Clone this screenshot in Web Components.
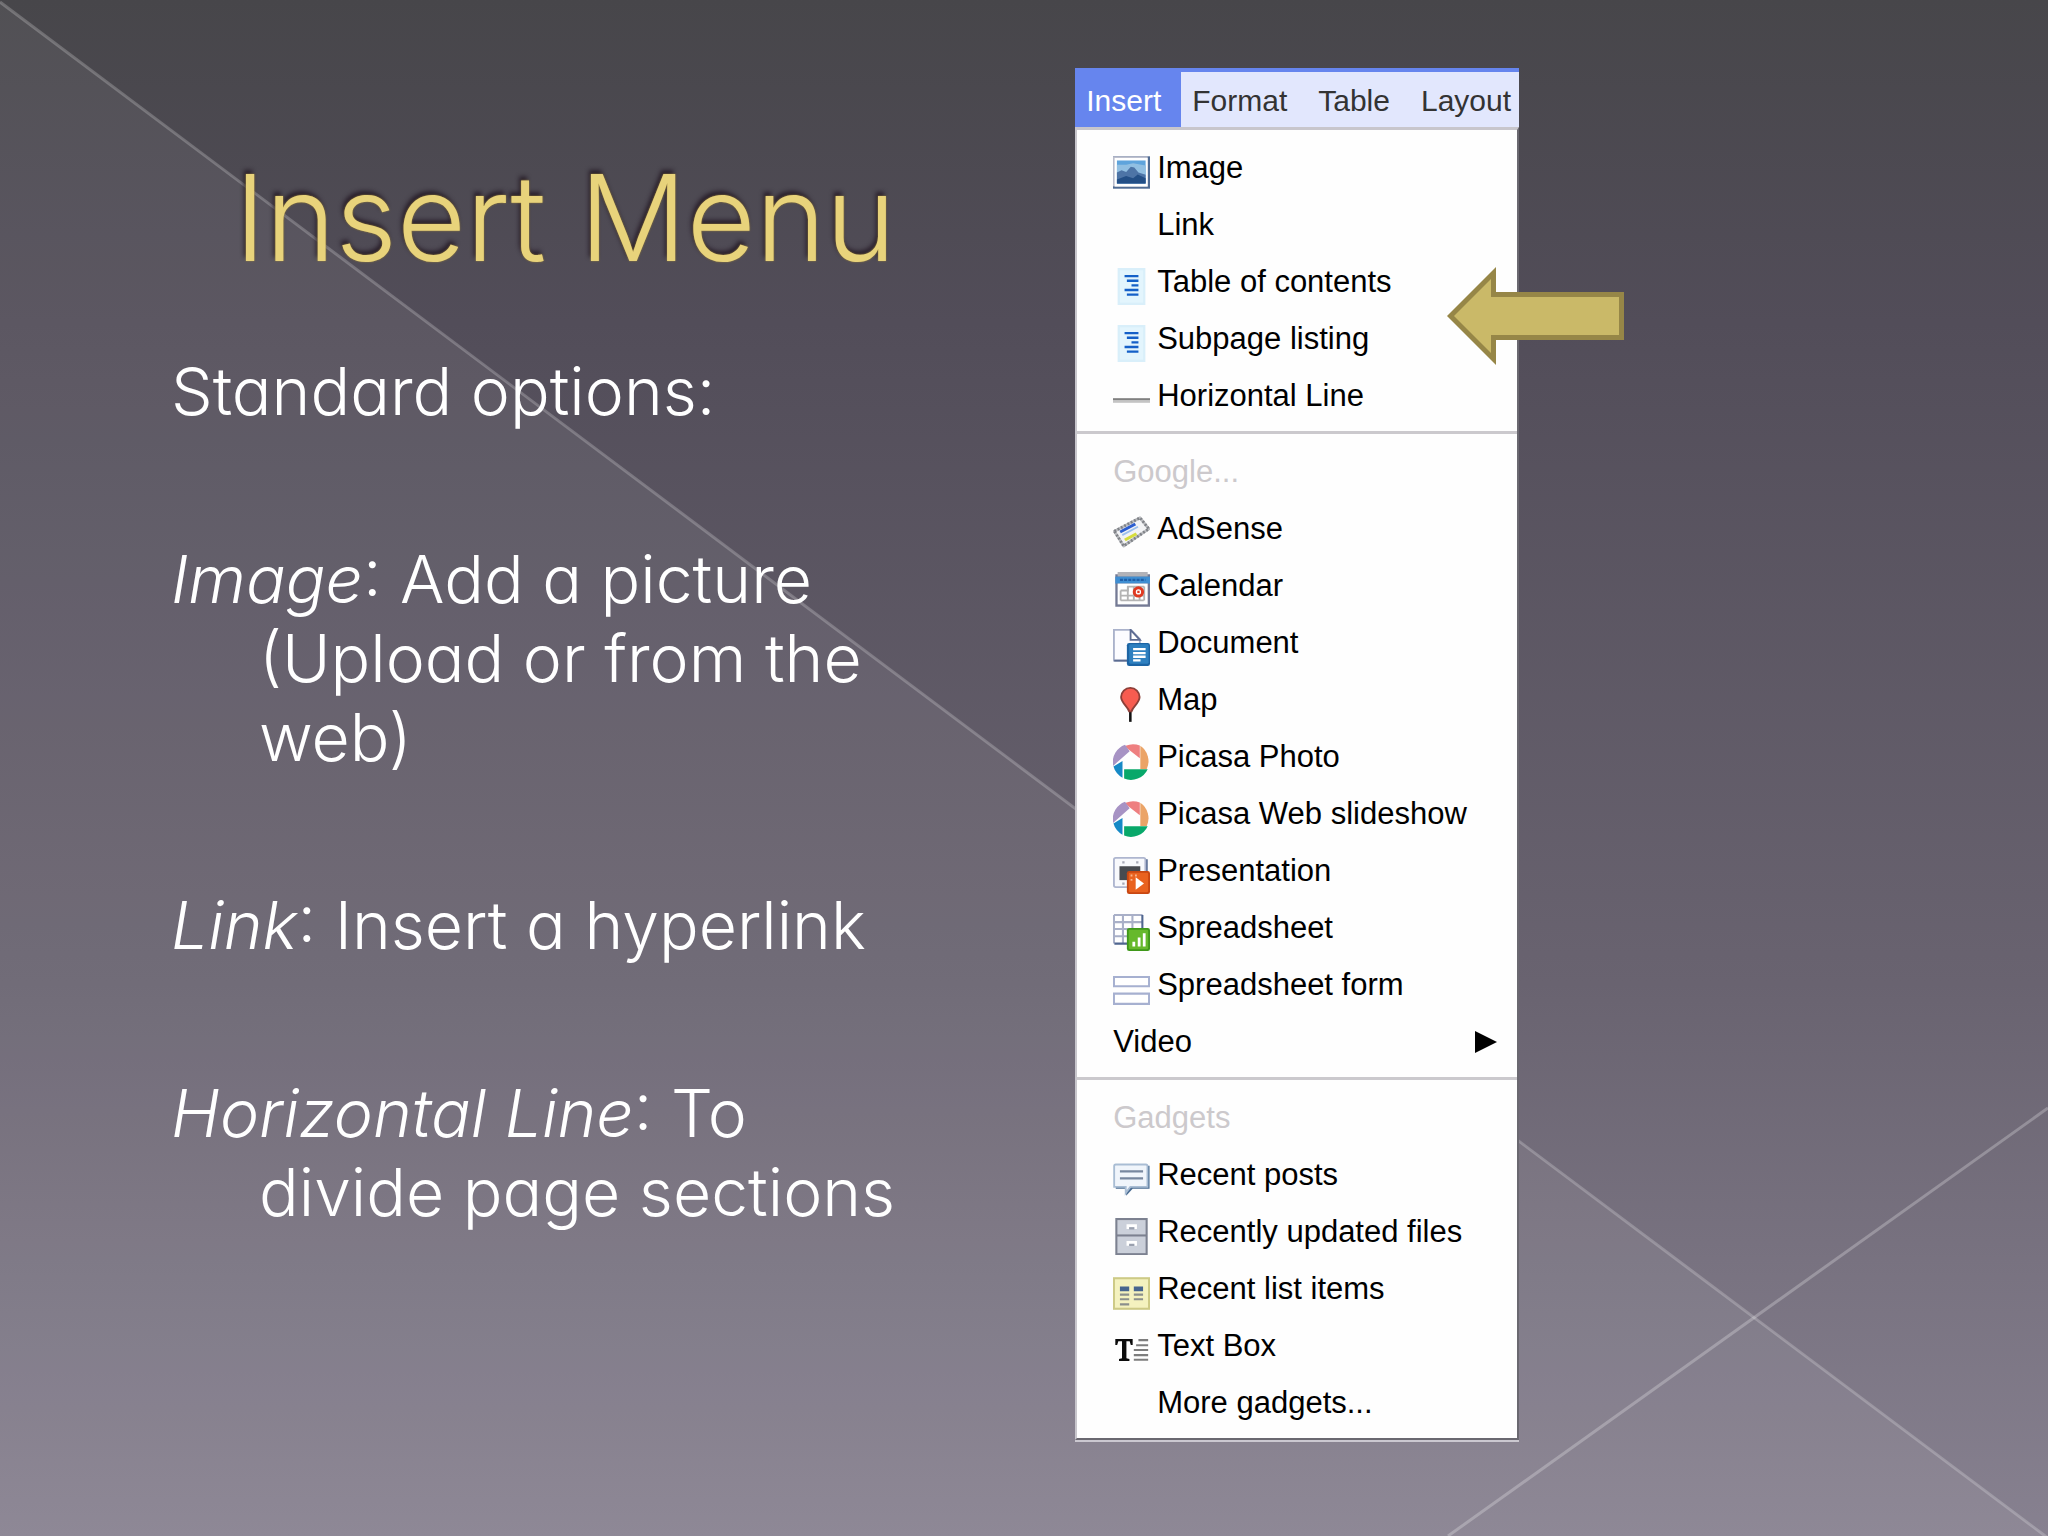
<!DOCTYPE html>
<html lang="en">
<head>
    <meta charset="UTF-8">
    <meta name="viewport" content="width=device-width, initial-scale=1.0">
    <title>Insert Menu</title>
    <style>
        body {
            margin: 0;
            background: #6b6572;
        }
    </style>
</head>
<body>
    <slide-page>
        <slide-title slot="text">Insert Menu</slide-title>
        <slide-notes slot="text">
            <p>Standard options:</p>
            <p><em>Image</em>: Add a picture<br>(Upload or from the<br>web)</p>
            <p><em>Link</em>: Insert a hyperlink</p>
            <p><em>Horizontal Line</em>: To<br>divide page sections</p>
        </slide-notes>
        <insert-menu slot="menu"></insert-menu>
        <callout-arrow slot="menu"></callout-arrow>
    </slide-page>

    <script>
        // Icons are drawn on a 16 x 16 grid
        const page = `
            <rect x="2" width="12" height="16" fill="#d9effa"/>
            <rect x="3" y="1" width="10" height="14" fill="#e3f5fd"/>
            <path d="M5 3h6v1H5zM6 5h5v1H6zM8 7h3v1H8zM5 9h6v1H5zM6 11h5v1H6z" fill="#1560c8"/>`;
        const picasa = `
            <path d="M5.5 1.2 A8 8 0 0 1 11.6 1.1 V6.6 L5.5 1.8z" fill="#ee7f80"/>
            <path d="M11.8 1.2 A8 8 0 0 1 14.6 11.2 H11.8z" fill="#eba467"/>
            <path d="M4.8 11.3 H15 A8 8 0 0 1 4.8 15.4z" fill="#08a86a"/>
            <path d="M0.2 10.2 L4.1 7.8 V15 A8 8 0 0 1 0.2 10.2z" fill="#1689c6"/>
            <path d="M0 9.6 A8 8 0 0 1 5.2 .8 L7.2 3.6 L0 9.9z" fill="#a793c4"/>`;

        const iconos = {
            image: `
                <rect y="1" width="16" height="14" fill="#4f6b93"/>
                <rect y="1" width="15" height="13" fill="#b9bccb"/>
                <rect x=".7" y="1.7" width="14.3" height="12.4" fill="#fff"/>
                <rect x="1.7" y="2.8" width="12.4" height="10" fill="#5fa4dc"/>
                <path d="M1.7 4.6h4l3-.6 5.4 1v4H1.7z" fill="#91bfe2"/>
                <path d="M1.7 8l2-1 2 .8 2-2.3 1.5.3L11 8l3.1 1v3.8H1.7z" fill="#4d74a6"/>
                <path d="M1.7 11l4-1.5 3 1 2-1.6 3.4 1.6v2.3H1.7z" fill="#234f86"/>`,
            toc: page,
            subpage: page,
            line: `<rect y="7" width="16" height="1" fill="#808080"/><rect y="8" width="16" height="1" fill="#c4c4c4"/>`,
            adsense: `
                <path d="M.6 7 11.700 1.200 15.500 6 4.600 13.400z" fill="#f2f3f5" stroke="#b9bbbf" stroke-width="1.200" stroke-linejoin="round"/>
                <path d="M.6 7 11.700 1.200 15.500 6 4.600 13.400z" fill="none" stroke="#7f8287" stroke-width="1.200" stroke-dasharray=".8 .8"/>
                <path d="M2.800 6.800l6.500-3.400.7 1-6.600 3.500z" fill="#2c5ed0"/>
                <path d="M4 8.700l6.800-3.600" stroke="#9cc0ee" stroke-width=".8"/>
                <path d="M4.800 10.300l5-2.700.7 1-5 2.800z" fill="#d6dd3c"/>`,
            calendar: `
                <path d="M1 1h15v14H1z" fill="#747a94"/>
                <path d="M2 0h13v2H2z" fill="#b1b2b8"/>
                <rect x="1" y="2" width="15" height="3" fill="#3f8ed2"/>
                <path d="M3 3.4h11" stroke="#1f5fa8" stroke-width=".9" stroke-dasharray="1.3 .5"/>
                <rect x="2" y="5" width="13" height="9" fill="#fff"/>
                <path d="M3.3 8h3.2V6.3h7M3.3 10.2h10M3.3 12.3h10M3.3 8v4.3M6.4 6.3v6M9 6.3v6M11.5 6.3v6M13.5 6.3v6" fill="none" stroke="#b4b4b4" stroke-width=".8"/>
                <circle cx="11" cy="8.600" r="1.800" fill="#fff" stroke="#df3a22" stroke-width="1.300"/>
                <rect x="10.500" y="8.100" width="1" height="1" fill="#df3a22"/>`,
            document: `
                <path d="M.4.4h7.4l3.8 4v9.2H.4z" fill="#fcfcff" stroke="#aab2cb" stroke-width=".8"/>
                <path d="M7.6.4v4.3h4z" fill="#fff" stroke="#5d6c92" stroke-width=".8"/>
                <path d="M.5 13.7h6" stroke="#5a6b90" stroke-width=".8"/>
                <rect x="6" y="6" width="10" height="10" rx="1" fill="#1c64a4"/>
                <rect x="7" y="6.6" width="8.4" height="8.4" rx=".6" fill="#2e80c0"/>
                <path d="M8.7 8.7h5.4M8.7 10.4h5.4M8.7 12h5.4M8.7 13.6h3.2" stroke="#fff"/>`,
            map: `
                <path d="M7.5 10v5.5" stroke="#111" stroke-width="1.1"/>
                <path d="M7.5.8a4 4 0 0 1 4 4C11.5 7.300 8.500 9 8 11H7C6.500 9 3.500 7.300 3.500 4.800a4 4 0 0 1 4-4z" fill="#f75c50" stroke="#8d3f38" stroke-width=".8"/>`,
            picasa: picasa,
            slideshow: picasa,
            presentation: `
                <path d="M1 1h14v12H1z" fill="#4e638c"/>
                <rect x=".4" y=".4" width="13.6" height="12.6" rx=".8" fill="#f8f9fc" stroke="#aeb6cf" stroke-width=".8"/>
                <path d="M4 1.8h1v1H4zM10 1.8h1v1h-1zM4 11h1v1H4z" fill="#a8abb8"/>
                <rect x="2.8" y="4" width="9" height="6" fill="#484b50"/>
                <rect x="6" y="6" width="10" height="10" rx="1" fill="#c84712"/>
                <rect x="6.800" y="6.800" width="8.400" height="8.400" rx=".5" fill="#e9621f"/>
                <path d="M9.800 8.800l3.600 2.700-3.600 2.700z" fill="#fff"/>
                <path d="M7.600 7.600h.8v.8h-.8zM9.500 7.600h.8v.8h-.8zM7.600 9.500h.8v.8h-.8z" fill="#f7b48c"/>`,
            spreadsheet: `
                <rect x=".4" y=".4" width="12.400" height="12.400" fill="#fff"/>
                <path d="M.4.4v12.400M4.300.4v12.400M8.400.4v12.400M.4.4h12.400M.4 3.500h12.400M.4 6.500h12.400M.4 9.600h12.400" stroke="#a9b0c8" stroke-width=".9" fill="none"/>
                <path d="M12.700.4v12.400H.6" stroke="#4f658f" stroke-width=".9" fill="none"/>
                <rect x="6" y="6" width="10" height="10" rx="1" fill="#3f981a"/>
                <rect x="6.800" y="6.800" width="8.400" height="8.400" rx=".5" fill="#66b92c"/>
                <path d="M9 12v2M11.300 10.200V14M13.500 8.300V14" stroke="#fff" stroke-width="1.200"/>`,
            form: `<path d="M.4 2.600h15.200v4H.4zM.4 9.800h15.200v4.400H.4z" fill="#fff" stroke="#a6b0d0" stroke-width=".9"/>`,
            posts: `
                <path d="M1.200 2h14.600v10H8.500l-2.800 3v-3H1.200z" fill="#4a6c92"/>
                <path d="M.5 2.200q0-.7.700-.7h13q.7 0 .7.700v9H7.500L5.500 13.800V11.200H.5z" fill="#f0f5fb" stroke="#a9bdd4" stroke-width=".8"/>
                <path d="M3 4.500h10M3 7.500h10" stroke="#77879f" stroke-width=".9"/>`,
            files: `
                <rect x="1" width="14" height="16" fill="#7c8190"/>
                <rect x="1.900" y=".9" width="12.200" height="6.200" fill="#cbd0da"/>
                <rect x="1.900" y="8" width="12.200" height="7.200" fill="#cbd0da"/>
                <path d="M6.400 4.800V3.300h3.400v1.500M6.400 12V10.500h3.400V12" fill="none" stroke="#fff" stroke-width="1.100"/>
                <path d="M7 4.500h2.200M7 11.700h2.200" stroke="#9aa0ae" stroke-width=".9"/>`,
            list: `
                <rect x=".4" y="1.400" width="15.200" height="13.200" fill="#f4f2bf" stroke="#cdca86" stroke-width=".9"/>
                <path d="M3 5h4v2H3zM9 5h4v2H9z" fill="#47658e"/>
                <path d="M3 8.500h4M3 10.500h4M3 12.700h4M9 8.500h4M9 10.500h4" stroke="#8a8f8c" stroke-width=".9"/>`,
            textbox: `
                <path d="M1 3h7.500v2.600h-.8L7.200 4H5.800v7.300l1.300.4v.8H2.600v-.8l1.300-.4V4H2.300l-.5 1.600H1z" fill="#0c0c0c"/>
                <path d="M11 3.500h4.200M10 5.700h5.200M9 7.800h6.200M9 10h6.200M9 12h6.200" stroke="#7d7d7d" stroke-width=".9"/>`,
            none: ''
        };

        class SlidePage extends HTMLElement {
            constructor() {
                super();
                this.attachShadow({ mode: 'open' });
            }
            connectedCallback() {
                this.shadowRoot.innerHTML = `
                    <style>
                        :host {
                            display: grid;
                            grid-template-columns: 52.5% 444px 1fr;
                            align-items: start;
                            position: relative;
                            box-sizing: border-box;
                            min-height: 100vh;
                            padding: 68px 0;
                            overflow: hidden;
                            background: linear-gradient(#47464a, #524d59 21%, #696370 64%, #878190);
                        }
                        svg {
                            position: absolute;
                            inset: 0;
                            width: 100%;
                            height: 100%;
                        }
                        .text {
                            position: relative;
                            padding: 80px 116px 0 171px;
                        }
                        .menu {
                            position: relative;
                        }
                    </style>
                    <svg viewBox="0 0 2048 1536" preserveAspectRatio="none" aria-hidden="true">
                        <path d="M0 2 2048 1538H0z" fill="#fff" fill-opacity=".06"/>
                        <path d="M0 2 2048 1538" stroke="#fff" stroke-opacity=".22" stroke-width="3"/>
                        <path d="M2048 1108 1448 1536" stroke="#fff" stroke-opacity=".25" stroke-width="3"/>
                    </svg>
                    <div class="text"><slot name="text"></slot></div>
                    <div class="menu"><slot name="menu"></slot></div>
                `;
            }
        }
        customElements.define('slide-page', SlidePage);

        class SlideTitle extends HTMLElement {
            constructor() {
                super();
                this.attachShadow({ mode: 'open' });
            }
            connectedCallback() {
                this.shadowRoot.innerHTML = `
                    <style>
                        :host {
                            display: block;
                        }
                        h1 {
                            margin: 0;
                            font: 350 119px/140px "Century Gothic", Inter, sans-serif;
                            color: #e8d37b;
                            text-align: center;
                            white-space: nowrap;
                            text-shadow: 0 0 2px #a48a3c, -2px -4px 4px rgba(30, 18, 30, .75);
                        }
                    </style>
                    <h1><slot></slot></h1>
                `;
            }
        }
        customElements.define('slide-title', SlideTitle);

        class SlideNotes extends HTMLElement {
            constructor() {
                super();
                this.attachShadow({ mode: 'open' });
            }
            connectedCallback() {
                this.shadowRoot.innerHTML = `
                    <style>
                        :host {
                            display: flex;
                            flex-direction: column;
                            gap: 109px;
                            padding-top: 64px;
                            font: 300 66px/79px "Century Gothic", Inter, sans-serif;
                            font-feature-settings: "cv11";
                            color: #fff;
                            white-space: nowrap;
                        }
                        ::slotted(p) {
                            margin: 0;
                            padding-left: 88px;
                            text-indent: -88px;
                        }
                    </style>
                    <slot></slot>
                `;
            }
        }
        customElements.define('slide-notes', SlideNotes);

        class MenuEntry extends HTMLElement {
            constructor() {
                super();
                this.attachShadow({ mode: 'open' });
            }
            connectedCallback() {
                const icono = this.getAttribute('icon');
                this.shadowRoot.innerHTML = `
                    <style>
                        :host {
                            display: block;
                        }
                        button {
                            display: flex;
                            align-items: center;
                            gap: 7px;
                            width: 100%;
                            padding: 0 20px 0 36px;
                            border: 0;
                            background: none;
                            font: 31px/57px "Liberation Sans", Arial, sans-serif;
                            color: #000;
                            text-align: left;
                            white-space: nowrap;
                        }
                        button:disabled {
                            color: #ccc9cc;
                        }
                        .icon {
                            flex: none;
                            width: 37px;
                            height: 37px;
                            margin-top: 10px;
                        }
                        .more {
                            width: 22px;
                            height: 22px;
                            margin-left: auto;
                        }
                    </style>
                    <button type="button" role="menuitem" ${this.hasAttribute('disabled') ? 'disabled' : ''}>
                        ${icono ? `<svg class="icon" viewBox="0 0 16 16" aria-hidden="true">${iconos[icono]}</svg>` : ''}
                        <span><slot></slot></span>
                        ${this.hasAttribute('submenu') ? '<svg class="more" viewBox="0 0 22 22" aria-hidden="true"><path d="M0 0 22 11 0 22z"/></svg>' : ''}
                    </button>
                `;
            }
        }
        customElements.define('menu-entry', MenuEntry);

        class InsertMenu extends HTMLElement {
            constructor() {
                super();
                this.attachShadow({ mode: 'open' });
            }
            connectedCallback() {
                const pestanas = ['Insert', 'Format', 'Table', 'Layout'];
                const grupos = [
                    {
                        items: [
                            { icon: 'image', texto: 'Image' },
                            { icon: 'none', texto: 'Link' },
                            { icon: 'toc', texto: 'Table of contents' },
                            { icon: 'subpage', texto: 'Subpage listing' },
                            { icon: 'line', texto: 'Horizontal Line' }
                        ]
                    },
                    {
                        titulo: 'Google...',
                        items: [
                            { icon: 'adsense', texto: 'AdSense' },
                            { icon: 'calendar', texto: 'Calendar' },
                            { icon: 'document', texto: 'Document' },
                            { icon: 'map', texto: 'Map' },
                            { icon: 'picasa', texto: 'Picasa Photo' },
                            { icon: 'slideshow', texto: 'Picasa Web slideshow' },
                            { icon: 'presentation', texto: 'Presentation' },
                            { icon: 'spreadsheet', texto: 'Spreadsheet' },
                            { icon: 'form', texto: 'Spreadsheet form' },
                            { submenu: true, texto: 'Video' }
                        ]
                    },
                    {
                        titulo: 'Gadgets',
                        items: [
                            { icon: 'posts', texto: 'Recent posts' },
                            { icon: 'files', texto: 'Recently updated files' },
                            { icon: 'list', texto: 'Recent list items' },
                            { icon: 'textbox', texto: 'Text Box' },
                            { icon: 'none', texto: 'More gadgets...' }
                        ]
                    }
                ];
                this.shadowRoot.innerHTML = `
                    <style>
                        :host {
                            display: block;
                        }
                        nav {
                            display: flex;
                            overflow: hidden;
                            border-top: 4px solid #6685ee;
                            background: #e2e7fd;
                        }
                        nav button {
                            flex: none;
                            padding: 2px 20px 0 11px;
                            border: 0;
                            background: none;
                            font: 30px/53px "Liberation Sans", Arial, sans-serif;
                            color: #333;
                        }
                        nav button.activa {
                            background: #6685ee;
                            color: #fff;
                        }
                        .panel {
                            border: solid #c8c6cc;
                            border-width: 3px 2px 2px;
                            border-right-color: #6a6870;
                            border-bottom-color: #6a6870;
                            background: #fefefe;
                            box-shadow: 0 2px #cbc8d0;
                        }
                        .grupo {
                            padding: 9px 0 7px;
                        }
                        .grupo + .grupo {
                            border-top: 3px solid #cbc9cd;
                        }
                    </style>
                    <nav>
                        ${pestanas.map((pestana, i) => `<button type="button" class="${i === 0 ? 'activa' : ''}">${pestana}</button>`).join('')}
                    </nav>
                    <div class="panel" role="menu">
                        ${grupos.map((grupo) => `
                            <div class="grupo" role="group">
                                ${grupo.titulo ? `<menu-entry disabled>${grupo.titulo}</menu-entry>` : ''}
                                ${grupo.items.map((item) => `
                                    <menu-entry ${item.icon ? `icon="${item.icon}"` : ''} ${item.submenu ? 'submenu' : ''}>${item.texto}</menu-entry>
                                `).join('')}
                            </div>
                        `).join('')}
                    </div>
                `;
            }
        }
        customElements.define('insert-menu', InsertMenu);

        // Arrow laid over the right edge of the menu
        class CalloutArrow extends HTMLElement {
            constructor() {
                super();
                this.attachShadow({ mode: 'open' });
            }
            connectedCallback() {
                this.shadowRoot.innerHTML = `
                    <style>
                        :host {
                            display: block;
                            position: absolute;
                            top: 199px;
                            left: 372px;
                        }
                        svg {
                            display: block;
                            width: 177px;
                            height: 98px;
                        }
                    </style>
                    <svg viewBox="0 0 177 98" aria-hidden="true">
                        <path d="M0 49 49 0V25H177V73H49V98z" fill="#968647"/>
                        <path d="M7 49 44 12V30H172V68H44V86z" fill="#cab968"/>
                    </svg>
                `;
            }
        }
        customElements.define('callout-arrow', CalloutArrow);
    </script>
</body>
</html>
